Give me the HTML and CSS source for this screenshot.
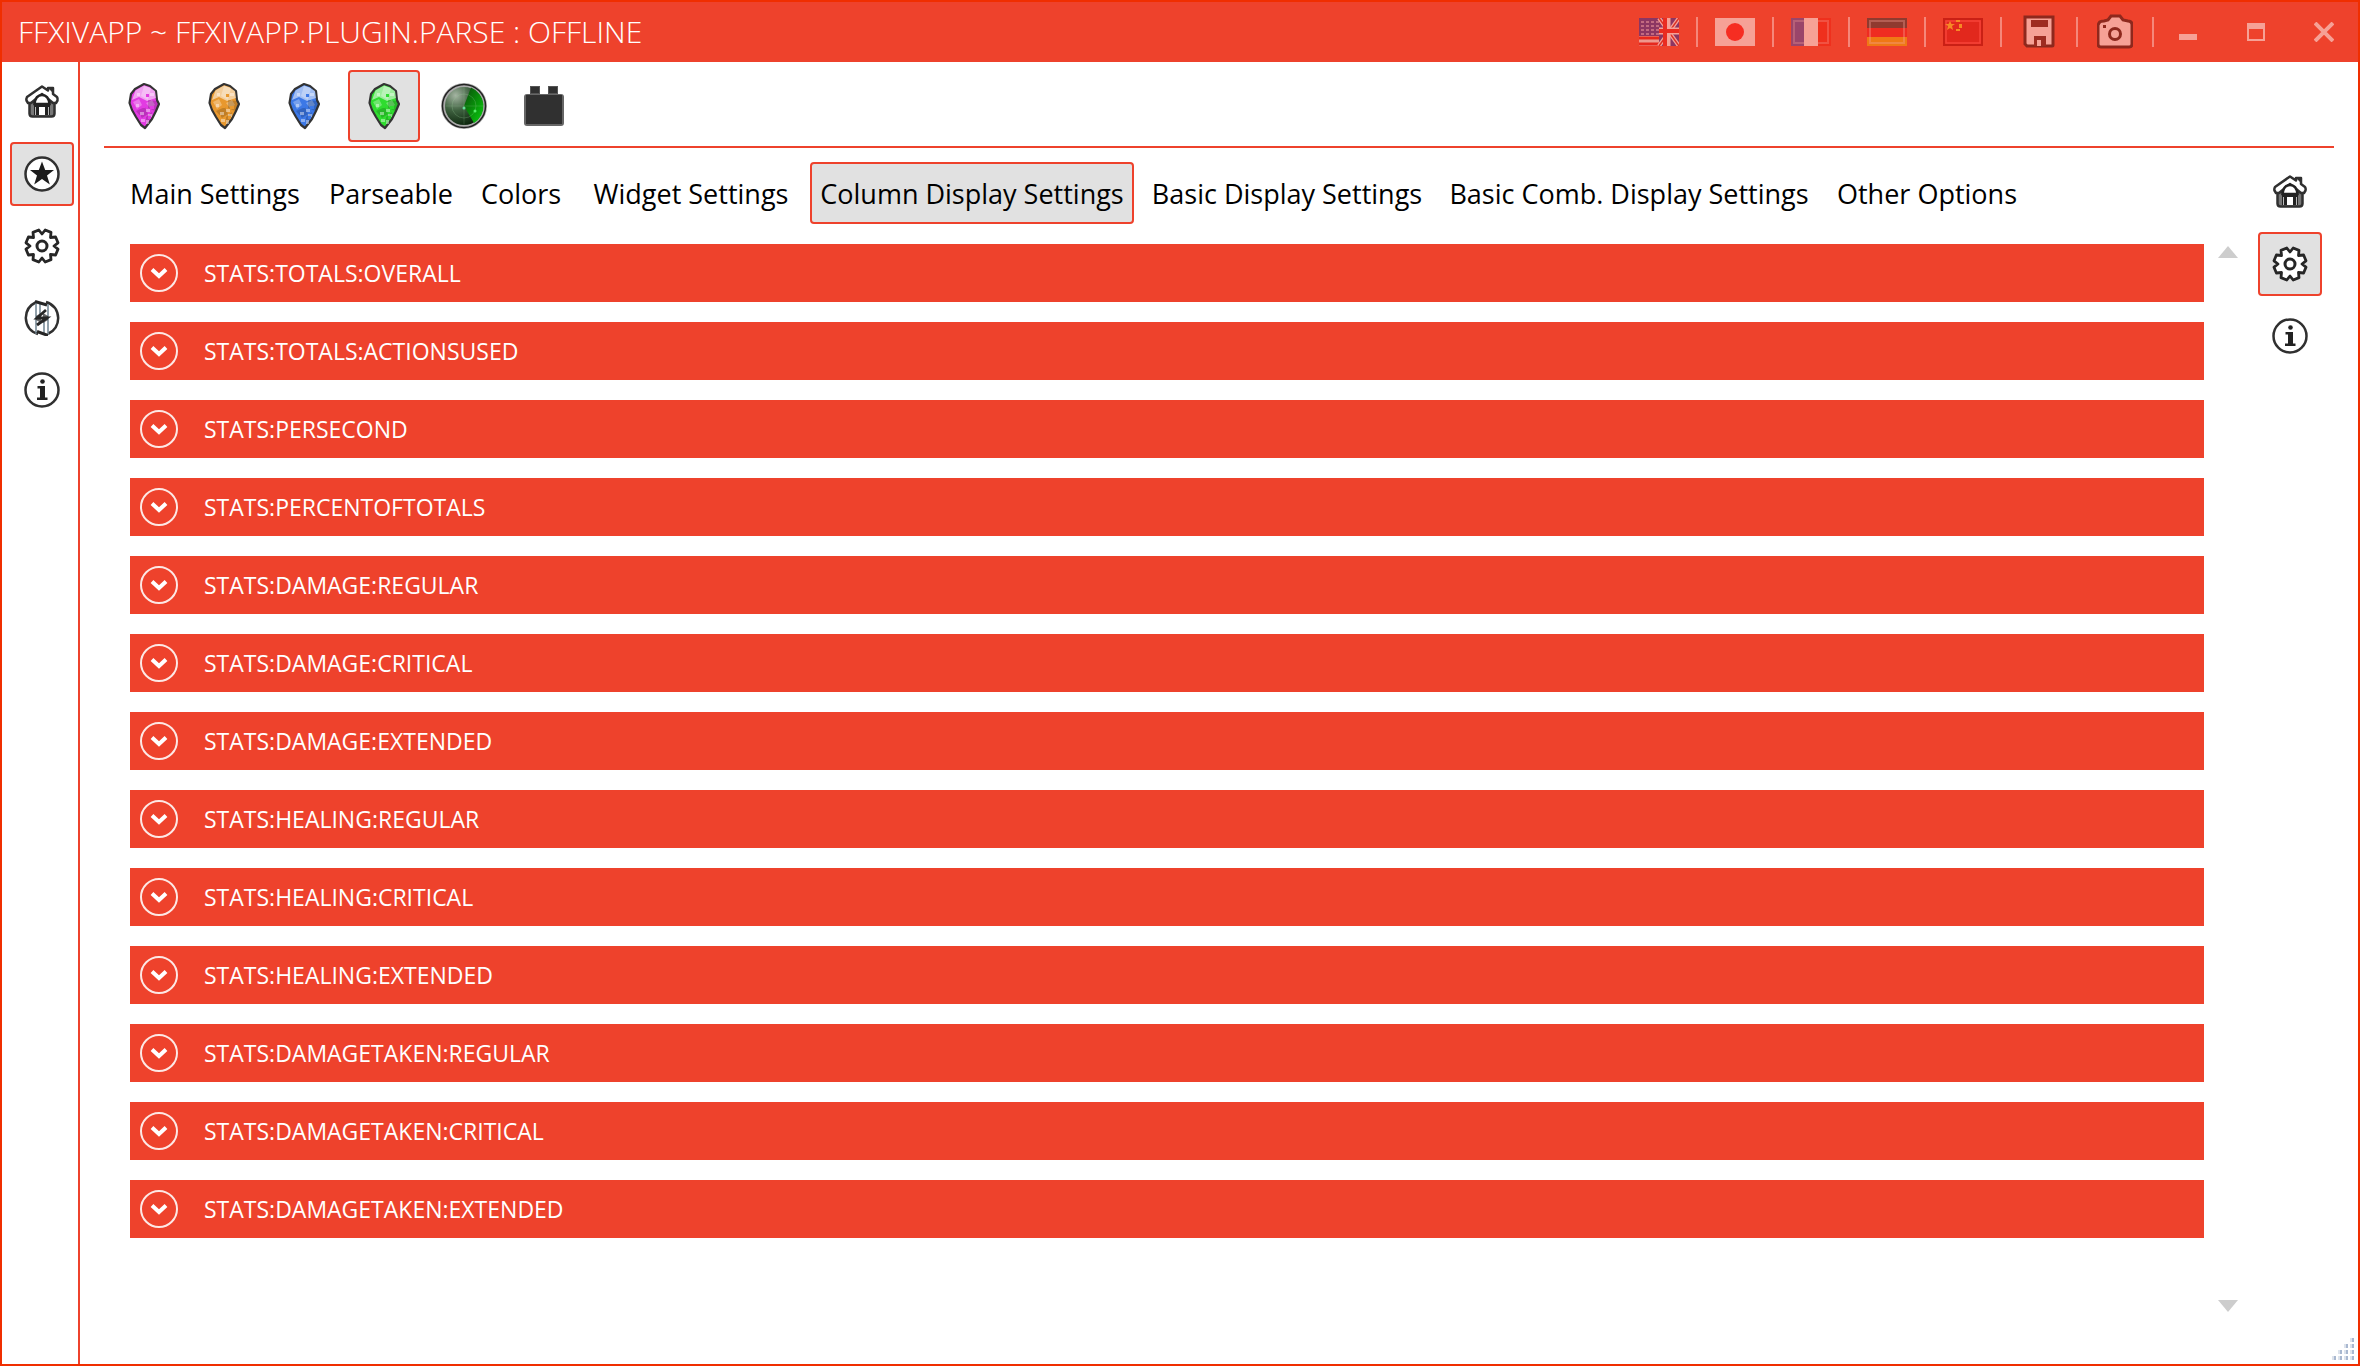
FILE: index.html
```html
<!DOCTYPE html>
<html lang="en">
<head>
<meta charset="utf-8">
<meta name="viewport" content="width=device-width, initial-scale=1">
<title>FFXIVAPP ~ FFXIVAPP.PLUGIN.PARSE : OFFLINE</title>
<link rel="stylesheet" href="styles.css">
</head>
<body>
<svg class="defs" aria-hidden="true">
  <defs>
    <radialGradient id="radar-base" cx="30%" cy="25%" r="80%">
      <stop offset="0" stop-color="#a4b4a2"/><stop offset=".45" stop-color="#3f6140"/><stop offset="1" stop-color="#031c04"/>
    </radialGradient>
    <linearGradient id="radar-sweep" x1="0" y1="0" x2="1" y2="1">
      <stop offset="0" stop-color="#0a4a0c"/><stop offset=".6" stop-color="#089a0a"/><stop offset="1" stop-color="#0cd012"/>
    </linearGradient>
  </defs>
  <symbol id="home" viewBox="0 0 36 36">
    <path d="M5.500 18v11.500q0 3 3 3h19q3 0 3-3V18z" fill="#777" stroke="#303030" stroke-width="2.500"/>
    <path d="M18 2.500 3 13q-1 2-.500 3.500l1.500 2.500h3L18 10l11 9h3l1.500-2.500q.500-2-.500-3.500l-4-3V4h-5v2.500z" fill="#fff" stroke="#303030" stroke-width="2.500" stroke-linejoin="round"/>
    <path d="M24 4h5v5z" fill="#303030"/>
    <path d="M10.500 20q1-9 7.500-9t7.500 9z" fill="#fff" stroke="#222" stroke-width="2.500"/>
    <path d="M10 20.500h16V31H10z" fill="#222"/>
    <path d="M15 23h6v8h-6z" fill="#fff"/><path d="M11 23h1v8h-1zm13 0h1v8h-1z" fill="#bbb"/>
  </symbol>
  <symbol id="star" viewBox="0 0 36 36">
    <circle cx="18" cy="18" r="16.500" fill="#fff" stroke="#303030" stroke-width="2.500"/>
    <path d="m18 5.500 3.200 8.500h8.800l-7 5.500 2.800 9-7.800-5.500-7.800 5.500 2.800-9-7-5.500h8.800z" fill="#1c1c1c"/>
  </symbol>
  <symbol id="gear" viewBox="0 0 36 36">
    <path d="M18 6 21.200 2 27 4.400 26.500 9.500 31.600 9 34 14.800 30 18 34 21.200 31.600 27 26.500 26.500 27 31.600 21.200 34 18 30 14.800 34 9 31.600 9.500 26.500 4.400 27 2 21.200 6 18 2 14.800 4.400 9 9.500 9.500 9 4.400 14.800 2z" fill="#fff" stroke="#262626" stroke-width="2.800" stroke-linejoin="round"/>
    <circle cx="18" cy="18" r="5" fill="#fff" stroke="#262626" stroke-width="3"/>
  </symbol>
  <symbol id="swap" viewBox="0 0 36 36">
    <path d="M11.500 2.500Q2 7 1.800 18q.700 12.500 12.200 16M24.500 33.500Q34 29 34.200 18 33.500 5.500 22 2" fill="none" stroke="#303030" stroke-width="2.500"/>
    <path d="M12 1v33M16 2v12M20 22v13M24 4v31" stroke="#6f8290" stroke-width="1.500"/>
    <path d="M11 1.500 23 5M13 31.500 24 35.500" stroke="#262626" stroke-width="3"/>
    <path d="m22 10-9 8h10l-10 7" fill="none" stroke="#262626" stroke-width="2.800"/>
    <path d="m12 16 5-3v10l-5-3zM24 20l-5 3V13l5 3z" fill="#262626" opacity=".7"/>
  </symbol>
  <symbol id="info" viewBox="0 0 36 36">
    <circle cx="18" cy="18" r="16.500" fill="#fff" stroke="#303030" stroke-width="2.500"/>
    <circle cx="18.500" cy="9.500" r="2.300" fill="#222"/>
    <path d="M13.500 14H21v11.500h2.500V28H13v-2.500h3v-9h-2.500z" fill="#222"/>
  </symbol>
  <symbol id="crystal" viewBox="0 0 32 48">
    <path d="M16 2 22 4 28 9 29 18 31 22 28 29 24 37 17 46 13 43 8 35 4 28 1.500 21 3 12 7 7z" fill="currentColor" stroke="#333" stroke-width="2.200" stroke-linejoin="round"/>
    <path d="M16 3.500 7.500 8.500 4 18l7-3 8 4 9-3-1-7-5.500-3.500z" fill="#fff" opacity=".52"/>
    <path d="m16 4-3 10 7 4 3-12zM5 20l6-3 3 6-5 4zm13 1 6-3 3 5-5 3z" fill="#fff" opacity=".3"/>
    <path d="m20 18 9 1 1 4-3 6-7-3zM8 29l9-4 3 7-6 4zm10 6 6-5-1 6-5 5z" fill="#000" opacity=".17"/>
    <path d="M12 30h4v3h-4zm8 2h4v3h-4zM13 37h4v3h-4zm5 1h3v4h-3zM8 22h3v3H8zm10 5h4v3h-4zM22 11h4v3h-4zM9 11h3v3H9z" fill="#fff" opacity=".42"/>
    <path d="M14 22h3v4h-3zm6 12h3v3h-3zM10 33h3v3h-3zm12-9h4v3h-4zm-4-12h3v3h-3z" fill="currentColor"/>
  </symbol>
  <symbol id="toggle" viewBox="0 0 38 38">
    <circle cx="19" cy="19" r="18" fill="none" stroke="#fff" stroke-opacity=".88" stroke-width="2"/>
    <path d="m12 15.500 7 6.500 7-6.500" fill="none" stroke="#fff" stroke-width="4"/>
  </symbol>
</svg>

<div class="window">
  <header class="titlebar">
    <h1 class="title">FFXIVAPP ~ FFXIVAPP.PLUGIN.PARSE : OFFLINE</h1>
    <div class="commands">
      <button class="command" aria-label="English"><svg class="flag" viewBox="0 0 40 28"><path fill="#2c2c98" d="M0 0h40v28H0z"/><path d="M2 4h18M2 8h18M2 12h18M2 16h18" stroke="#bbb5e8" stroke-width="1.500" stroke-dasharray="3 2"/><path fill="#eee" d="M0 18h20v10H0z"/><path stroke="#e01010" stroke-width="3" d="M0 20h20M0 26h20"/><path d="m20 0 20 28M40 0 20 28" stroke="#fff" stroke-width="4"/><path d="m20 0 20 28M40 0 20 28" stroke="#c22" stroke-width="1.500"/><path d="M28 0v28M20 13h20" stroke="#fff" stroke-width="7"/><path d="M26 0v28M20 13h20" stroke="#e81818" stroke-width="4"/></svg></button>
      <span class="divider"></span>
      <button class="command" aria-label="Japanese"><svg class="flag" viewBox="0 0 40 28"><path fill="#fff" d="M0 0h40v28H0z"/><ellipse cx="20" cy="14" rx="9" ry="9" fill="#ff1a1a"/></svg></button>
      <span class="divider"></span>
      <button class="command" aria-label="French"><svg class="flag" viewBox="0 0 40 28"><path fill="#4848a8" d="M0 0h13v28H0z"/><path fill="#fff" d="M13 0h14v28H13z"/><path fill="#f02010" d="M27 0h13v28H27z"/><path fill="none" stroke="#fff" stroke-opacity=".3" stroke-width="2" d="M3 3h34v22H3z"/></svg></button>
      <span class="divider"></span>
      <button class="command" aria-label="German"><svg class="flag" viewBox="0 0 40 28"><path fill="#333" d="M0 0h40v10H0z"/><path fill="#f01818" d="M0 10h40v9H0z"/><path fill="#f0b000" d="M0 19h40v9H0z"/><path fill="none" stroke="#fff" stroke-opacity=".35" stroke-width="2" d="M3 3h34v22H3z"/></svg></button>
      <span class="divider"></span>
      <button class="command" aria-label="Chinese"><svg class="flag" viewBox="0 0 40 28"><path fill="#d81010" d="M1 1h38v26H1z" stroke="#a80000" stroke-width="2"/><path fill="none" stroke="#f44" stroke-width="1.500" d="M3 3h34v22H3z"/><path fill="#ffd020" d="m7 3 1.500 3H12l-3 2 1 4-3-2-3 2 1-4-3-2h3.500zM13 2h4v2h-4zm3 4h3v4h-3zm-3 5h4v2h-4z"/></svg></button>
      <span class="divider"></span>
      <button class="command" aria-label="Save"><svg class="tool" viewBox="0 0 36 36"><path d="M4 3h28v28q0 1-1 1H6l-2-2z" fill="#fff" stroke="#301010" stroke-width="3"/><path fill="#501818" d="M10 6h17v7H10zM13 22h12v10H13z"/><path fill="#fff" d="M16 26h4v6h-4z"/></svg></button>
      <span class="divider"></span>
      <button class="command" aria-label="Screenshot"><svg class="tool" viewBox="0 0 36 36"><path d="M2 9q1-2 5-2l4-1 3-4h9l3 4 5 1q4 0 4 4v19q0 3-3 3H4q-3 0-3-3V11z" fill="#fff" stroke="#301010" stroke-width="3"/><circle cx="18" cy="20" r="5.500" fill="none" stroke="#301010" stroke-width="3"/><path fill="#301010" d="M6 11h3v3H6z"/></svg></button>
      <span class="divider"></span>
      <button class="control" aria-label="Minimize"><svg class="glyph" viewBox="0 0 20 20"><path fill="#fff" d="M1 12h18v6H1z"/></svg></button>
      <button class="control" aria-label="Maximize"><svg class="glyph" viewBox="0 0 20 20"><path fill="#fff" fill-rule="evenodd" d="M1 1h18v18H1zM3 7v10h14V7z"/></svg></button>
      <button class="control" aria-label="Close"><svg class="glyph" viewBox="0 0 20 20"><path d="m1 1 18 18M19 1 1 19" stroke="#fff" stroke-width="4"/></svg></button>
    </div>
  </header>

  <div class="workspace">
    <nav class="rail rail-left" aria-label="Application">
      <button class="rail-item" aria-label="Home"><svg><use href="#home"/></svg></button>
      <button class="rail-item selected" aria-label="Plugins"><svg><use href="#star"/></svg></button>
      <button class="rail-item" aria-label="Settings"><svg><use href="#gear"/></svg></button>
      <button class="rail-item" aria-label="Update"><svg><use href="#swap"/></svg></button>
      <button class="rail-item" aria-label="About"><svg><use href="#info"/></svg></button>
    </nav>

    <main class="main">
      <div class="plugins" role="toolbar" aria-label="Plugins">
        <button class="plugin" aria-label="Event"><svg class="crystal magenta"><use href="#crystal"/></svg></button>
        <button class="plugin" aria-label="Informer"><svg class="crystal orange"><use href="#crystal"/></svg></button>
        <button class="plugin" aria-label="Log"><svg class="crystal blue"><use href="#crystal"/></svg></button>
        <button class="plugin selected" aria-label="Parse"><svg class="crystal green"><use href="#crystal"/></svg></button>
        <button class="plugin" aria-label="Radar"><svg class="radar" viewBox="0 0 46 46"><circle cx="23" cy="23" r="21" fill="url(#radar-base)" stroke="#aaa" stroke-width="4"/><path d="M23 23 30 4.500A20 20 0 0 1 33 40z" fill="url(#radar-sweep)"/><circle cx="23" cy="23" r="12" fill="none" stroke="#9c9" stroke-opacity=".25"/><path d="M23 4v38M4 23h38" stroke="#9c9" stroke-opacity=".2"/><circle cx="23" cy="25" r="1.500" fill="#6d9"/><circle cx="34" cy="28" r="1.500" fill="#5e6"/><circle cx="23" cy="23" r="21.500" fill="none" stroke="#222" stroke-width="1.500"/></svg></button>
        <button class="plugin" aria-label="Widgets"><svg class="brick" viewBox="0 0 40 40"><path fill="#555" d="M6 0h10v9H6zm18 0h10v9H24z"/><rect y="8" width="40" height="32" rx="3" fill="#666"/><path fill="#303030" d="M7 1h8v6H7zm18 0h8v6h-8zM2 9h36v29H2z"/></svg></button>
      </div>

      <div class="content">
        <section class="panel">
          <div class="tabs" role="tablist">
            <button class="tab" role="tab">Main Settings</button>
            <button class="tab" role="tab">Parseable</button>
            <button class="tab" role="tab">Colors</button>
            <button class="tab" role="tab">Widget Settings</button>
            <button class="tab selected" role="tab" aria-selected="true">Column Display Settings</button>
            <button class="tab" role="tab">Basic Display Settings</button>
            <button class="tab" role="tab">Basic Comb. Display Settings</button>
            <button class="tab" role="tab">Other Options</button>
          </div>
          <div class="scroller">
            <div class="groups">
              <button class="group" aria-expanded="false"><svg><use href="#toggle"/></svg>STATS:TOTALS:OVERALL</button>
              <button class="group" aria-expanded="false"><svg><use href="#toggle"/></svg>STATS:TOTALS:ACTIONSUSED</button>
              <button class="group" aria-expanded="false"><svg><use href="#toggle"/></svg>STATS:PERSECOND</button>
              <button class="group" aria-expanded="false"><svg><use href="#toggle"/></svg>STATS:PERCENTOFTOTALS</button>
              <button class="group" aria-expanded="false"><svg><use href="#toggle"/></svg>STATS:DAMAGE:REGULAR</button>
              <button class="group" aria-expanded="false"><svg><use href="#toggle"/></svg>STATS:DAMAGE:CRITICAL</button>
              <button class="group" aria-expanded="false"><svg><use href="#toggle"/></svg>STATS:DAMAGE:EXTENDED</button>
              <button class="group" aria-expanded="false"><svg><use href="#toggle"/></svg>STATS:HEALING:REGULAR</button>
              <button class="group" aria-expanded="false"><svg><use href="#toggle"/></svg>STATS:HEALING:CRITICAL</button>
              <button class="group" aria-expanded="false"><svg><use href="#toggle"/></svg>STATS:HEALING:EXTENDED</button>
              <button class="group" aria-expanded="false"><svg><use href="#toggle"/></svg>STATS:DAMAGETAKEN:REGULAR</button>
              <button class="group" aria-expanded="false"><svg><use href="#toggle"/></svg>STATS:DAMAGETAKEN:CRITICAL</button>
              <button class="group" aria-expanded="false"><svg><use href="#toggle"/></svg>STATS:DAMAGETAKEN:EXTENDED</button>
            </div>
            <div class="scrollbar">
              <button class="arrow" aria-label="Scroll up"><svg viewBox="0 0 20 12"><path fill="#cdcdcd" d="M10 0 20 12H0z"/></svg></button>
              <button class="arrow" aria-label="Scroll down"><svg viewBox="0 0 20 12"><path fill="#cdcdcd" d="M0 0h20L10 12z"/></svg></button>
            </div>
          </div>
        </section>
        <nav class="rail rail-right" aria-label="Parse plugin">
          <button class="rail-item" aria-label="Home"><svg><use href="#home"/></svg></button>
          <button class="rail-item selected" aria-label="Settings"><svg><use href="#gear"/></svg></button>
          <button class="rail-item" aria-label="About"><svg><use href="#info"/></svg></button>
        </nav>
      </div>
    </main>
  </div>
  <svg class="grip" viewBox="0 0 22 22" aria-hidden="true">
    <path fill="#dde3ec" d="M18 0h4v4h-4zM12 6h4v4h-4zm6 0h4v4h-4zM6 12h4v4H6zm6 0h4v4h-4zm6 0h4v4h-4zM0 18h4v4H0zm6 0h4v4H6zm6 0h4v4h-4zm6 0h4v4h-4z"/>
    <path fill="#a9b8d0" d="M20 0h2v4h-2zM14 6h2v4h-2zm6 0h2v4h-2zM8 12h2v4H8zm6 0h2v4h-2zm6 0h2v4h-2zM2 18h2v4H2zm6 0h2v4H8zm6 0h2v4h-2zm6 0h2v4h-2z"/>
  </svg>
</div>
</body>
</html>
```
FILE: styles.css
```css
:root {
  --accent: #ee422c;
  --edge: #f02e00;
  --selected: #e1e1e1;
}

* { box-sizing: border-box; }

body {
  margin: 0;
  background: #fff;
  color: #000;
  font-family: "Open Sans", "Noto Sans", sans-serif;
}

button {
  margin: 0;
  padding: 0;
  border: 0;
  background: none;
  color: inherit;
  font: inherit;
}

svg { display: block; }

.defs {
  position: absolute;
  width: 0;
  height: 0;
}

.window {
  position: relative;
  display: flex;
  flex-direction: column;
  min-height: 100vh;
  border: 2px solid var(--edge);
}

/* Title bar */
.titlebar {
  display: flex;
  justify-content: space-between;
  height: 60px;
  background: var(--accent);
  color: #fff;
}

.title {
  margin: 0;
  padding-left: 16px;
  font-size: 30px;
  font-weight: 300;
  line-height: 60px;
  white-space: nowrap;
}

.commands {
  display: flex;
  align-items: center;
}

.command,
.control {
  display: flex;
  align-items: center;
  justify-content: center;
  width: 74px;
  height: 60px;
  opacity: .5;
}

.control { width: 68px; }

.divider {
  width: 2px;
  height: 30px;
  background: #f5877a;
}

.flag { width: 40px; height: 28px; }
.tool { width: 36px; height: 36px; }
.glyph { width: 20px; height: 20px; }

/* Icon rails */
.workspace {
  display: flex;
  flex: 1;
}

.rail {
  display: flex;
  flex-direction: column;
  gap: 8px;
}

.rail-left {
  padding: 8px 4px 8px 8px;
  border-right: 2px solid var(--accent);
}

.rail-right {
  margin: 12px 12px 0 20px;
}

.rail-item {
  display: flex;
  align-items: center;
  justify-content: center;
  width: 64px;
  height: 64px;
  border: 2px solid transparent;
  border-radius: 4px;
}

.rail-item svg { width: 36px; height: 36px; }

.rail-item.selected,
.plugin.selected,
.tab.selected {
  border-color: var(--accent);
  background: var(--selected);
}

/* Plugin toolbar */
.main {
  display: flex;
  flex: 1;
  flex-direction: column;
  min-width: 0;
  padding: 0 24px;
}

.plugins {
  display: flex;
  gap: 8px;
  padding: 8px 4px 4px;
  border-bottom: 2px solid var(--accent);
}

.plugin {
  display: flex;
  align-items: center;
  justify-content: center;
  width: 72px;
  height: 72px;
  border: 2px solid transparent;
  border-radius: 4px;
}

.crystal { width: 32px; height: 48px; }
.magenta { color: #e23be2; }
.orange { color: #e8982e; }
.blue { color: #3c78e6; }
.green { color: #2fdc2f; }
.radar { width: 46px; height: 46px; }
.brick { width: 40px; height: 40px; }

/* Settings panel */
.content {
  display: flex;
  flex: 1;
}

.panel {
  display: flex;
  flex: 1;
  flex-direction: column;
  gap: 20px;
  min-width: 0;
  padding: 14px 0 52px 14px;
}

.tabs {
  display: grid;
  grid-template-columns: 194px 142px 102px 222px 324px 290px 378px 202px;
  gap: 8px;
}

.tab {
  display: flex;
  align-items: center;
  justify-content: center;
  height: 62px;
  border: 2px solid transparent;
  border-radius: 4px;
  font-size: 27px;
  white-space: nowrap;
}

.scroller {
  display: flex;
  flex: 1;
  gap: 14px;
  padding-left: 12px;
}

.groups {
  display: flex;
  flex: 1;
  flex-direction: column;
  gap: 20px;
}

.group {
  display: flex;
  align-items: center;
  gap: 26px;
  height: 58px;
  padding: 0 10px;
  background: var(--accent);
  color: #fff;
  font-size: 23px;
}

.group svg { width: 38px; height: 38px; }

.scrollbar {
  display: flex;
  flex-direction: column;
  justify-content: space-between;
  padding-top: 2px;
}

.arrow svg { width: 20px; height: 12px; }

.grip {
  position: absolute;
  right: 4px;
  bottom: 4px;
  width: 22px;
  height: 22px;
}
```
